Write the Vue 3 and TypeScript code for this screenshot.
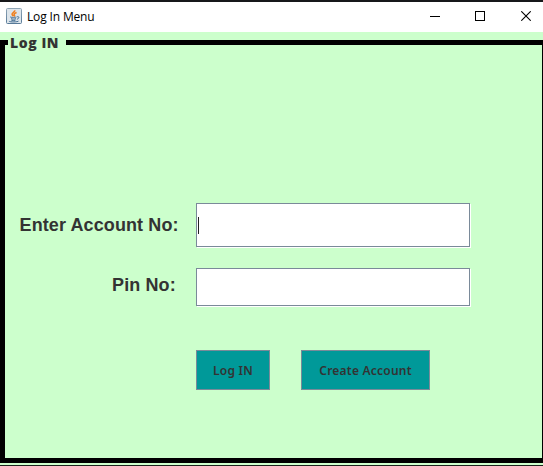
<script setup lang="ts">
import { ref } from 'vue'

const accountNo = ref<string>('')
const pinNo = ref<string>('')
</script>

<template>
  <div class="window">
    <header class="titlebar">
      <svg class="java" width="16" height="16" viewBox="0 0 16 16">
        <defs>
          <linearGradient id="tile" x1="0" y1="0" x2="0" y2="1">
            <stop offset="0" stop-color="#8fa5b6" />
            <stop offset="1" stop-color="#587a98" />
          </linearGradient>
        </defs>
        <rect x=".5" y=".5" width="15" height="15" rx="1" fill="#dde5eb" stroke="url(#tile)" />
        <path d="M8.7 2.2C9.4 4 5.7 4.5 6.1 6.3c.2.9 1 1.2 1.2 2M10.6 4.6C8.4 5.4 7.7 6.2 8.4 7.1c.4.6.3 1-.2 1.4" fill="none" stroke="#ef8122" stroke-width="1.6" />
        <path d="M4.3 8.8c-.8.7 5.3.8 6.2.2M5 10.7c1.2.5 3.8.5 5 0M5.3 12.2c1.3.4 3 .4 4.2 0M3.2 13c-.5 1.3 8.6 1.1 9.3.1M11.2 8.7c2.8-.3 1.7 2.1-.3 2.5" fill="none" stroke="#416b91" stroke-width="1" />
      </svg>
      <span class="title">Log In Menu</span>
      <div class="controls">
        <svg width="10" height="10" shape-rendering="crispEdges"><path d="M0 5h10v1H0z" /></svg>
        <svg width="10" height="10" shape-rendering="crispEdges"><path d="M0 0h10v10H0zM1 1v8h8V1z" fill-rule="evenodd" /></svg>
        <svg class="close" width="10" height="10"><path d="M.3.3l9.4 9.4M9.7.3L.3 9.7" stroke="#000" stroke-width="1.1" /></svg>
      </div>
    </header>
    <main class="panel">
      <fieldset class="group">
        <legend class="legend"><span>Log IN</span></legend>
        <form class="form" @submit.prevent>
          <label class="label account" for="account">Enter Account No:</label>
          <div class="field">
            <span class="caret"></span>
            <input id="account" v-model="accountNo" type="text" />
          </div>
          <label class="label pin" for="pin">Pin No:</label>
          <div class="field">
            <input id="pin" v-model="pinNo" type="password" />
          </div>
          <div class="actions">
            <button type="submit" class="login"><span>Log IN</span></button>
            <button type="button" class="create"><span>Create Account</span></button>
          </div>
        </form>
      </fieldset>
    </main>
  </div>
</template>

<style>
body {
  overflow: hidden;
}
</style>

<style scoped>
* {
  box-sizing: border-box;
}
.window {
  width: 543px;
  height: 466px;
  border-top: 2px solid #17181a;
  border-bottom: 1px solid #1c241c;
  background: #ccffcc;
  overflow: hidden;
}
.titlebar {
  display: flex;
  align-items: center;
  height: 30px;
  padding: 0 12px 0 6px;
  background: #fff;
}
.java {
  display: block;
  margin-top: -2px;
}
.title {
  margin: -1px 0 0 5px;
  font: 12px/16px "Open Sans", "Noto Sans", sans-serif;
  letter-spacing: -0.15px;
  color: #000;
}
.controls {
  display: flex;
  gap: 35px;
  margin: -2px 0 0 auto;
}
.controls svg {
  display: block;
}
.controls .close {
  margin-left: 1px;
}
.panel {
  height: 433px;
  padding-bottom: 2px;
}
.group {
  width: 543px;
  height: 428px;
  min-width: 0;
  margin: 3px 0 0;
  padding: 0;
  border: 5px solid #000;
  border-right-width: 1px;
}
.legend {
  width: 58px;
  height: 15px;
  margin-left: 3px;
  padding: 0 0 0 2px;
  font: 800 14px/15px "Open Sans", "Noto Sans", sans-serif;
  letter-spacing: 0.55px;
  color: #333;
  white-space: nowrap;
}
.form {
  display: grid;
  grid-template-columns: 191px 274px;
  grid-template-rows: 44px 38px 40px;
  row-gap: 21px;
  padding-top: 153px;
}
.label {
  font: bold 18px/44px "Liberation Sans", Arial, sans-serif;
  letter-spacing: 0.1px;
  color: #333;
  text-align: right;
  white-space: nowrap;
}
.account {
  padding-right: 17.4px;
}
.pin {
  padding-right: 20.2px;
  line-height: 34px;
}
.field {
  display: flex;
  align-items: center;
  background: #fff;
  border: 1px solid #7a8a99;
  box-shadow: 1px 1px 0 #fff;
}
.caret {
  width: 1px;
  height: 17px;
  margin: 0 0 0 1px;
  background: #222;
}
.field input {
  flex: 1;
  min-width: 0;
  height: 100%;
  padding: 0 2px;
  border: 0;
  outline: 0;
  background: transparent;
  font: 14px "Liberation Sans", sans-serif;
}
.actions {
  grid-column: 2;
  display: flex;
  gap: 31px;
  margin-top: 23px;
  height: 40px;
}
button {
  height: 40px;
  padding: 2px 0 0;
  border: 1px solid #7a8a99;
  background: #009999;
  color: #333;
  font: 600 12px/16px "Noto Sans", "Open Sans", sans-serif;
  letter-spacing: 0.22px;
  white-space: nowrap;
}
.login {
  width: 74px;
}
.create {
  width: 129px;
}
</style>
